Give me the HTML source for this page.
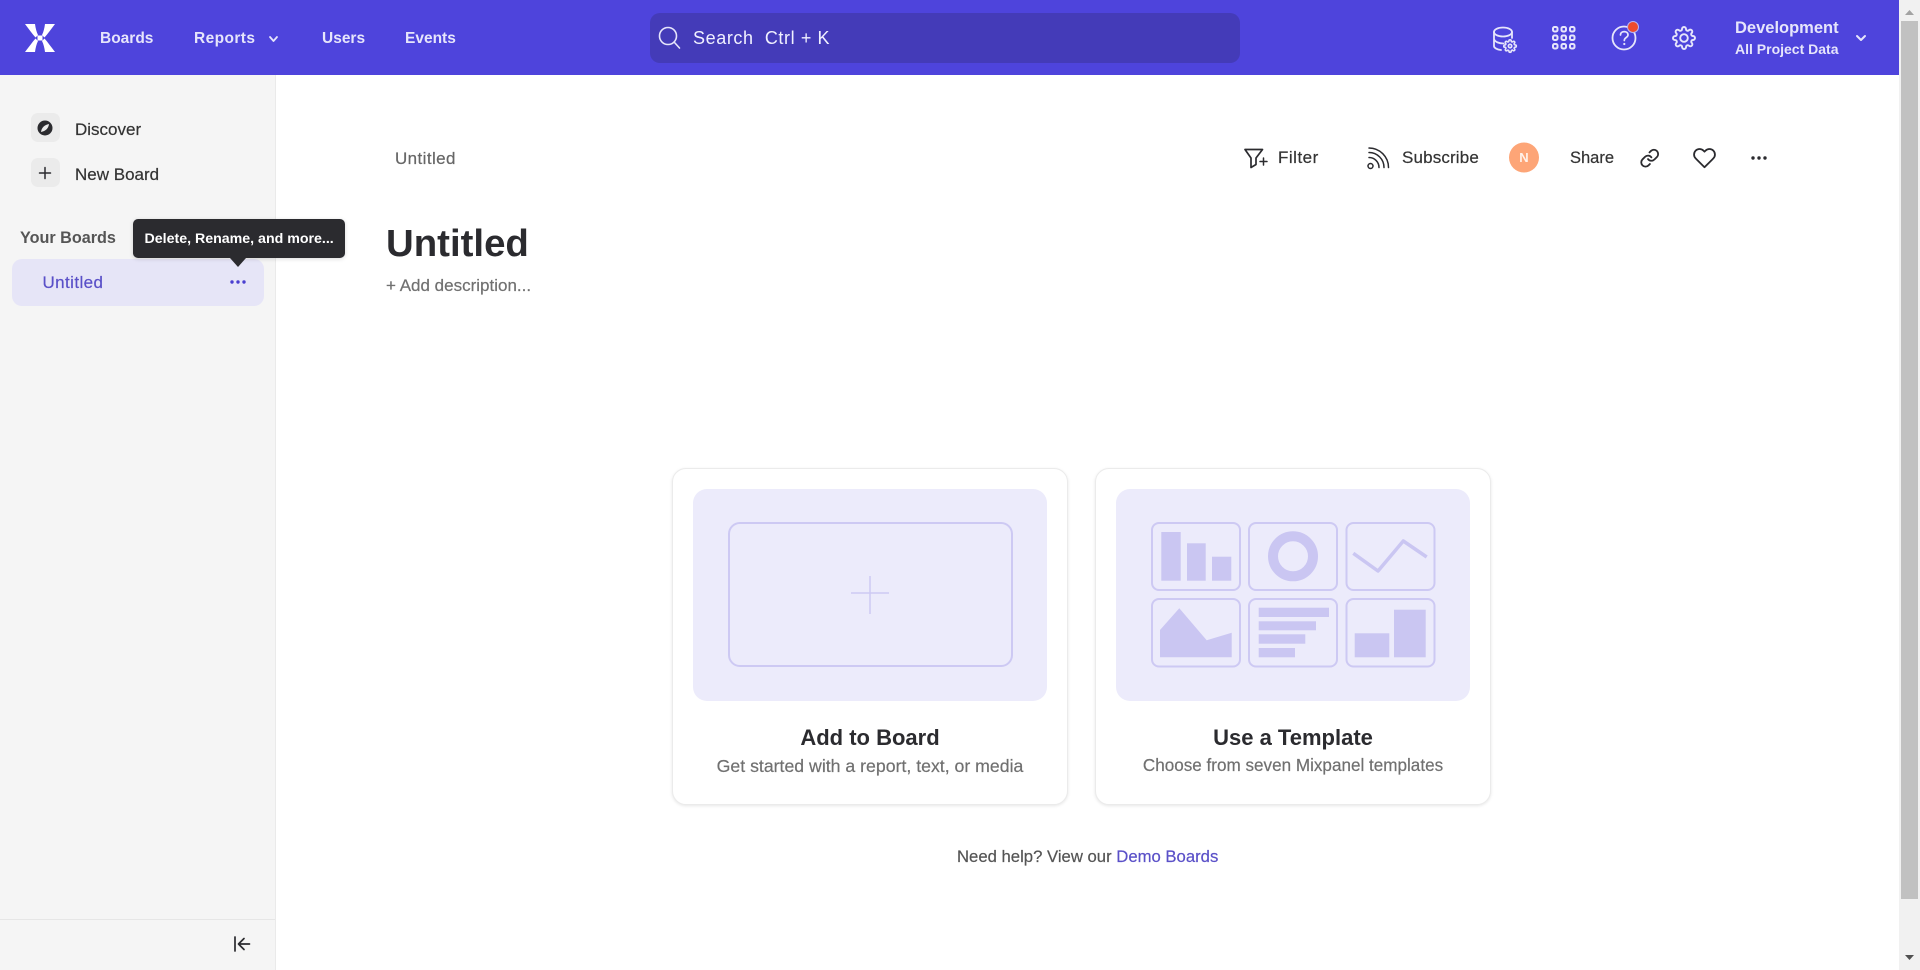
<!DOCTYPE html>
<html><head><meta charset="utf-8"><title>Untitled</title>
<style>
html,body{margin:0;padding:0;width:1920px;height:970px;overflow:hidden;background:#fff;font-family:"Liberation Sans",sans-serif;color:#2b2b2f}
.b{position:absolute}
.t{position:absolute;white-space:nowrap;line-height:20px;height:20px}
.c{transform:translateX(-50%)}
.nav{font-weight:bold;font-size:15.5px;color:#e6e5fb}
.m{-webkit-text-stroke:.2px currentColor}
svg{position:absolute;left:0;top:0}
</style></head><body>
<div class="b" style="left:0;top:0;width:1899px;height:75px;background:#4e44dc"></div>
<div class="b" style="left:650px;top:13px;width:590px;height:50px;background:#443bb8;border-radius:10px"></div>
<div class="b" style="left:0;top:75px;width:275px;height:895px;background:#f5f5f5;border-right:1px solid #eaeaea"></div>
<div class="b" style="left:0;top:919px;width:275px;height:1px;background:#e6e6e6"></div>
<div class="b" style="left:31px;top:113px;width:29px;height:29px;background:#ebebeb;border-radius:7px"></div>
<div class="b" style="left:31px;top:158px;width:29px;height:29px;background:#ebebeb;border-radius:7px"></div>
<div class="b" style="left:12px;top:259px;width:252px;height:47px;background:#e6e5f7;border-radius:10px"></div>
<div class="b" style="left:133px;top:219px;width:212px;height:39px;background:#2b2b2f;border-radius:5px;box-shadow:0 1px 4px rgba(0,0,0,.15)"></div>
<div class="b" style="left:672px;top:468px;width:394px;height:335px;background:#fff;border:1px solid #ebebeb;border-radius:14px;box-shadow:0 1px 3px rgba(0,0,0,.1)"></div>
<div class="b" style="left:1095px;top:468px;width:394px;height:335px;background:#fff;border:1px solid #ebebeb;border-radius:14px;box-shadow:0 1px 3px rgba(0,0,0,.1)"></div>
<div class="b" style="left:693px;top:489px;width:354px;height:212px;background:#ecebfb;border-radius:14px"></div>
<div class="b" style="left:1116px;top:489px;width:354px;height:212px;background:#ecebfb;border-radius:14px"></div>
<div class="b" style="left:1899px;top:0;width:21px;height:970px;background:#f1f1f1"></div>
<div class="b" style="left:1901px;top:21px;width:17px;height:878px;background:#c1c1c1"></div>

<svg width="1920" height="970" viewBox="0 0 1920 970" fill="none">
<!-- scrollbar arrows -->
<path d="M1905 15 L1909.500 10 L1914 15Z" fill="#a3a3a3"/>
<path d="M1905 955 L1909.500 960 L1914 955Z" fill="#505050"/>
<!-- logo -->
<g fill="#fff">
<path d="M25 24H35C35.500 28 36.500 32 38 35L35.500 37.500C32 33.500 28.500 28.500 25 24Z"/>
<path d="M55 24H45C44.500 28 43.500 32 42 35L44.500 37.500C48 33.500 51.500 28.500 55 24Z"/>
<path d="M25 52H35C35.500 48 36.500 44 38 41L35.500 38.500C32 42.500 28.500 47.500 25 52Z"/>
<path d="M55 52H45C44.500 48 43.500 44 42 41L44.500 38.500C48 42.500 51.500 47.500 55 52Z"/>
<rect x="37.500" y="35.500" width="5" height="5"/>
</g>
<!-- reports chevron -->
<path d="M270 37L273.500 41L277 37" stroke="#e6e5fb" stroke-width="1.800" stroke-linecap="round" stroke-linejoin="round"/>
<!-- search -->
<circle cx="668" cy="36" r="8.500" stroke="#e6e5fb" stroke-width="1.600"/>
<path d="M674.500 42.500L679.500 48" stroke="#e6e5fb" stroke-width="1.600" stroke-linecap="round"/>
<!-- db icon -->
<g stroke="#e6e5fb" stroke-width="1.800" stroke-linecap="round" stroke-linejoin="round">
<ellipse cx="1503" cy="32" rx="9" ry="4.500"/>
<path d="M1494 32V46C1494 48 1497 49.500 1501 50M1512 32V38M1494 39C1495 42 1499 43.500 1503.500 43.500"/>
</g>
<g transform="translate(1503.200 39.200) scale(.57)" stroke="#e6e5fb" stroke-width="2.900" stroke-linecap="round" stroke-linejoin="round">
<circle cx="12" cy="12" r="3"/>
<path d="M19.400 15a1.650 1.650 0 0 0 .33 1.820l.06.06a2 2 0 0 1 0 2.830 2 2 0 0 1-2.830 0l-.06-.06a1.650 1.650 0 0 0-1.820-.33 1.650 1.650 0 0 0-1 1.510V21a2 2 0 0 1-2 2 2 2 0 0 1-2-2v-.09A1.650 1.650 0 0 0 9 19.400a1.650 1.650 0 0 0-1.820.33l-.06.06a2 2 0 0 1-2.830 0 2 2 0 0 1 0-2.830l.06-.06a1.650 1.650 0 0 0 .33-1.820 1.650 1.650 0 0 0-1.510-1H3a2 2 0 0 1-2-2 2 2 0 0 1 2-2h.09A1.650 1.650 0 0 0 4.600 9a1.650 1.650 0 0 0-.33-1.820l-.06-.06a2 2 0 0 1 0-2.830 2 2 0 0 1 2.830 0l.06.06a1.650 1.650 0 0 0 1.820.33H9a1.650 1.650 0 0 0 1-1.510V3a2 2 0 0 1 2-2 2 2 0 0 1 2 2v.09a1.650 1.650 0 0 0 1 1.510 1.650 1.650 0 0 0 1.820-.33l.06-.06a2 2 0 0 1 2.830 0 2 2 0 0 1 0 2.830l-.06.06a1.650 1.650 0 0 0-.33 1.820V9a1.650 1.650 0 0 0 1.510 1H21a2 2 0 0 1 2 2 2 2 0 0 1-2 2h-.09a1.650 1.650 0 0 0-1.510 1z"/>
</g>
<!-- grid -->
<g stroke="#e6e5fb" stroke-width="2">
<rect x="1553" y="27" width="4.500" height="4.500" rx="1.500"/><rect x="1561.500" y="27" width="4.500" height="4.500" rx="1.500"/><rect x="1570" y="27" width="4.500" height="4.500" rx="1.500"/>
<rect x="1553" y="35.500" width="4.500" height="4.500" rx="1.500"/><rect x="1561.500" y="35.500" width="4.500" height="4.500" rx="1.500"/><rect x="1570" y="35.500" width="4.500" height="4.500" rx="1.500"/>
<rect x="1553" y="44" width="4.500" height="4.500" rx="1.500"/><rect x="1561.500" y="44" width="4.500" height="4.500" rx="1.500"/><rect x="1570" y="44" width="4.500" height="4.500" rx="1.500"/>
</g>
<!-- help -->
<circle cx="1624" cy="38" r="11.500" stroke="#e6e5fb" stroke-width="1.800"/>
<path d="M1620.500 35C1620.500 30.500 1628 30.500 1628 35C1628 37.500 1624.300 37.500 1624.300 40.500" stroke="#e6e5fb" stroke-width="1.700" stroke-linecap="round"/>
<circle cx="1624.300" cy="44" r="1.100" fill="#e6e5fb"/>
<circle cx="1633" cy="27" r="5.500" fill="#ef4b2e" stroke="#b9b4f3" stroke-width="1"/>
<!-- gear -->
<g transform="translate(1672 26)" stroke="#e6e5fb" stroke-width="1.900" stroke-linecap="round" stroke-linejoin="round">
<circle cx="12" cy="12" r="3.800"/>
<path d="M19.400 15a1.650 1.650 0 0 0 .33 1.820l.06.06a2 2 0 0 1 0 2.830 2 2 0 0 1-2.830 0l-.06-.06a1.650 1.650 0 0 0-1.820-.33 1.650 1.650 0 0 0-1 1.510V21a2 2 0 0 1-2 2 2 2 0 0 1-2-2v-.09A1.650 1.650 0 0 0 9 19.400a1.650 1.650 0 0 0-1.820.33l-.06.06a2 2 0 0 1-2.830 0 2 2 0 0 1 0-2.830l.06-.06a1.650 1.650 0 0 0 .33-1.820 1.650 1.650 0 0 0-1.510-1H3a2 2 0 0 1-2-2 2 2 0 0 1 2-2h.09A1.650 1.650 0 0 0 4.600 9a1.650 1.650 0 0 0-.33-1.820l-.06-.06a2 2 0 0 1 0-2.830 2 2 0 0 1 2.830 0l.06.06a1.650 1.650 0 0 0 1.820.33H9a1.650 1.650 0 0 0 1-1.510V3a2 2 0 0 1 2-2 2 2 0 0 1 2 2v.09a1.650 1.650 0 0 0 1 1.510 1.650 1.650 0 0 0 1.820-.33l.06-.06a2 2 0 0 1 2.830 0 2 2 0 0 1 0 2.830l-.06.06a1.650 1.650 0 0 0-.33 1.820V9a1.650 1.650 0 0 0 1.510 1H21a2 2 0 0 1 2 2 2 2 0 0 1-2 2h-.09a1.650 1.650 0 0 0-1.510 1z"/>
</g>
<path d="M1857 36L1861 40L1865 36" stroke="#e6e5fb" stroke-width="2" stroke-linecap="round" stroke-linejoin="round"/>
<!-- discover -->
<circle cx="45" cy="128" r="7.500" fill="#2b2b2f"/>
<path d="M41 132C41.500 128 44 125 49 124C48.500 128 46 131 41 132Z" fill="#ebebeb"/>
<!-- new board plus -->
<path d="M45 167.500V178.500M39.500 173H50.500" stroke="#2b2b2f" stroke-width="1.500" stroke-linecap="round"/>
<!-- tooltip arrow -->
<path d="M230 258H246L238 267Z" fill="#2b2b2f"/>
<!-- row dots -->
<g fill="#4a3fd0"><circle cx="232" cy="282" r="1.700"/><circle cx="238" cy="282" r="1.700"/><circle cx="244" cy="282" r="1.700"/></g>
<!-- collapse -->
<path d="M235 937V951M249.500 944H239M244 938.500L238.500 944L244 949.500" stroke="#2b2b2f" stroke-width="1.700" stroke-linecap="round" stroke-linejoin="round"/>
<!-- filter -->
<path d="M1245 149.500H1262.500L1256 158V164.500L1251 167.500V158Z" stroke="#2b2b2f" stroke-width="1.700" stroke-linejoin="round"/>
<path d="M1263.500 158V165M1260 161.500H1267" stroke="#2b2b2f" stroke-width="1.500" stroke-linecap="round"/>
<!-- subscribe -->
<circle cx="1370.500" cy="166" r="2.500" stroke="#2b2b2f" stroke-width="1.500"/>
<path d="M1369 157.500A10 10 0 0 1 1379 167.500M1369 152.500A15 15 0 0 1 1384 167.500M1369 148A19.500 19.500 0 0 1 1388.500 167.500" stroke="#2b2b2f" stroke-width="1.500" stroke-linecap="round"/>
<!-- avatar -->
<circle cx="1524" cy="157.500" r="15" fill="#fda577"/>
<!-- link -->
<g transform="translate(1639.500 148) scale(.85)" stroke="#2b2b2f" stroke-width="2.100" stroke-linecap="round" stroke-linejoin="round">
<path d="M10 13a5 5 0 0 0 7.540.54l3-3a5 5 0 0 0-7.070-7.070l-1.720 1.710"/>
<path d="M14 11a5 5 0 0 0-7.540-.54l-3 3a5 5 0 0 0 7.070 7.070l1.710-1.710"/>
</g>
<!-- heart -->
<g transform="translate(1692.500 146)" stroke="#2b2b2f" stroke-width="1.800" stroke-linecap="round" stroke-linejoin="round">
<path d="M20.840 4.610a5.500 5.500 0 0 0-7.780 0L12 5.670l-1.060-1.060a5.500 5.500 0 0 0-7.780 7.780l1.060 1.060L12 21.230l7.780-7.780 1.060-1.060a5.500 5.500 0 0 0 0-7.780z"/>
</g>
<g fill="#2b2b2f"><circle cx="1753" cy="158" r="1.700"/><circle cx="1759" cy="158" r="1.700"/><circle cx="1765" cy="158" r="1.700"/></g>
<!-- card 1 art -->
<rect x="729" y="523" width="283" height="143" rx="11" stroke="#cdc9f3" stroke-width="2"/>
<path d="M870 576V614M851 593H889" stroke="#cdc9f3" stroke-width="1.500"/>
<!-- card 2 art -->
<g stroke="#cdc9f3" stroke-width="2">
<rect x="1152" y="523" width="88" height="67" rx="7"/><rect x="1249" y="523" width="88" height="67" rx="7"/><rect x="1346.500" y="523" width="88" height="67" rx="7"/>
<rect x="1152" y="599" width="88" height="67.500" rx="7"/><rect x="1249" y="599" width="88" height="67.500" rx="7"/><rect x="1346.500" y="599" width="88" height="67.500" rx="7"/>
</g>
<g fill="#cac6f2">
<rect x="1161.300" y="532" width="19.400" height="48.700"/><rect x="1187" y="543.300" width="18.700" height="37.400"/><rect x="1212" y="556.700" width="19.300" height="24"/>
<path d="M1160 657.300V630L1179.300 608.300L1206.700 640.300L1231.700 632.700V657.300Z"/>
<rect x="1258.700" y="607.700" width="70.300" height="9.300"/><rect x="1258.700" y="621.300" width="57.300" height="9"/><rect x="1258.700" y="634.300" width="46.600" height="9.400"/><rect x="1258.700" y="648" width="36.300" height="9.300"/>
<rect x="1354.700" y="633.300" width="34.600" height="24"/><rect x="1394" y="609.700" width="31.700" height="47.600"/>
</g>
<circle cx="1293" cy="556.300" r="20" stroke="#cac6f2" stroke-width="10"/>
<path d="M1353.300 553.300L1378 571L1403.300 541L1426.700 557" stroke="#cac6f2" stroke-width="3.500" stroke-linejoin="round"/>
</svg>

<div class="t nav" style="left:100px;top:29px">Boards</div>
<div class="t nav" style="left:194px;top:29px;letter-spacing:.4px">Reports</div>
<div class="t nav" style="left:322px;top:29px">Users</div>
<div class="t nav" style="left:405px;top:29px">Events</div>
<div class="t" style="left:693px;top:28px;font-size:18px;letter-spacing:.6px;color:#f0f0ff;white-space:pre">Search  Ctrl + K</div>
<div class="t" style="left:1735px;top:18px;font-size:16.500px;font-weight:bold;color:#e6e5fb">Development</div>
<div class="t" style="left:1735px;top:39px;font-size:14px;font-weight:bold;color:#e6e5fb">All Project Data</div>

<div class="t m" style="left:75px;top:120px;font-size:17px;color:#333">Discover</div>
<div class="t m" style="left:75px;top:165px;font-size:17px;color:#333">New Board</div>
<div class="t" style="left:20px;top:228px;font-size:16.200px;font-weight:bold;color:#555">Your Boards</div>
<div class="t" style="left:144.500px;top:229px;font-size:14.200px;font-weight:bold;color:#fff">Delete, Rename, and more...</div>
<div class="t m" style="left:42.500px;top:273px;font-size:17px;letter-spacing:.4px;color:#5a50c8">Untitled</div>

<div class="t m" style="left:395px;top:149px;font-size:17px;letter-spacing:.4px;color:#666">Untitled</div>
<div class="t m" style="left:1278px;top:148px;font-size:17px;letter-spacing:.5px;color:#333">Filter</div>
<div class="t m" style="left:1402px;top:148px;font-size:17px;letter-spacing:.15px;color:#333">Subscribe</div>
<div class="t c" style="left:1524px;top:148px;font-size:13px;font-weight:bold;color:#fff2ea">N</div>
<div class="t m" style="left:1570px;top:148px;font-size:16.500px;color:#333">Share</div>
<div class="t" style="left:386px;top:222px;height:44px;line-height:44px;font-size:38.400px;font-weight:bold">Untitled</div>
<div class="t m" style="left:386px;top:276px;font-size:17px;color:#707070">+ Add description...</div>

<div class="t c" style="left:870px;top:728px;font-size:22px;font-weight:bold">Add to Board</div>
<div class="t c m" style="left:870px;top:756px;font-size:17.700px;color:#707070">Get started with a report, text, or media</div>
<div class="t c" style="left:1293px;top:728px;font-size:22px;font-weight:bold">Use a Template</div>
<div class="t c m" style="left:1293px;top:756px;font-size:17.100px;color:#707070">Choose from seven Mixpanel templates</div>
<div class="t m" style="left:957px;top:847px;font-size:16.700px;color:#555">Need help? View our <span style="color:#5a50c8">Demo Boards</span></div>
</body></html>
